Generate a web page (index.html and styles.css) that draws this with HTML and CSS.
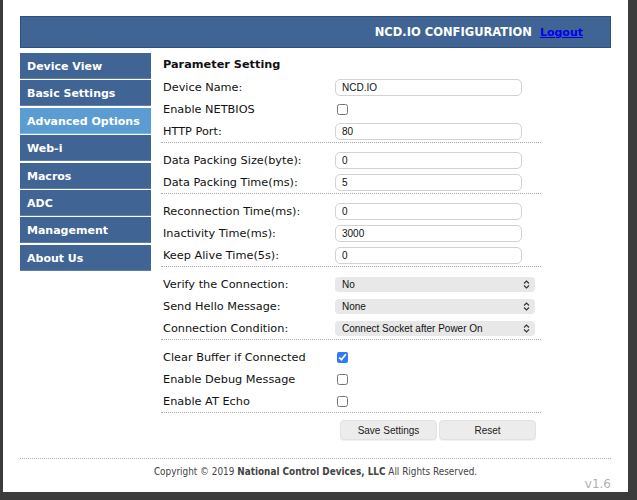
FILE: index.html
```html
<!DOCTYPE html>
<html lang="en">
<head>
    <meta charset="UTF-8">
    <title>NCD.IO Configuration</title>
    <link rel="stylesheet" href="styles.css">
</head>
<body>
    <div class="screen">
        <div class="page">
            <div class="topbar">
                <span class="title">NCD.IO CONFIGURATION</span>
                <a href="#" class="logout">Logout</a>
            </div>

            <div class="main">
                <ul class="menu">
                    <li>Device View</li>
                    <li>Basic Settings</li>
                    <li class="active">Advanced Options</li>
                    <li>Web-i</li>
                    <li>Macros</li>
                    <li>ADC</li>
                    <li>Management</li>
                    <li>About Us</li>
                </ul>

                <form class="settings" onsubmit="return false">
                    <h3>Parameter Setting</h3>
                    <div class="group">
                        <div class="row"><label>Device Name:</label><input type="text" class="field" value="NCD.IO"></div>
                        <div class="row"><label>Enable NETBIOS</label><input type="checkbox" class="check"></div>
                        <div class="row"><label>HTTP Port:</label><input type="text" class="field" value="80"></div>
                    </div>
                    <div class="group">
                        <div class="row"><label>Data Packing Size(byte):</label><input type="text" class="field" value="0"></div>
                        <div class="row"><label>Data Packing Time(ms):</label><input type="text" class="field" value="5"></div>
                    </div>
                    <div class="group">
                        <div class="row"><label>Reconnection Time(ms):</label><input type="text" class="field" value="0"></div>
                        <div class="row"><label>Inactivity Time(ms):</label><input type="text" class="field" value="3000"></div>
                        <div class="row"><label>Keep Alive Time(5s):</label><input type="text" class="field" value="0"></div>
                    </div>
                    <div class="group">
                        <div class="row"><label>Verify the Connection:</label>
                            <div class="select"><select><option>No</option></select><svg class="arrows" width="7" height="9" viewBox="0 0 7 9"><path d="M1 3.5 L3.5 1 L6 3.5 M1 5.5 L3.5 8 L6 5.5" fill="none" stroke="#333" stroke-width="1.1"/></svg></div>
                        </div>
                        <div class="row"><label>Send Hello Message:</label>
                            <div class="select"><select><option>None</option></select><svg class="arrows" width="7" height="9" viewBox="0 0 7 9"><path d="M1 3.5 L3.5 1 L6 3.5 M1 5.5 L3.5 8 L6 5.5" fill="none" stroke="#333" stroke-width="1.1"/></svg></div>
                        </div>
                        <div class="row"><label>Connection Condition:</label>
                            <div class="select"><select><option>Connect Socket after Power On</option></select><svg class="arrows" width="7" height="9" viewBox="0 0 7 9"><path d="M1 3.5 L3.5 1 L6 3.5 M1 5.5 L3.5 8 L6 5.5" fill="none" stroke="#333" stroke-width="1.1"/></svg></div>
                        </div>
                    </div>
                    <div class="group">
                        <div class="row"><label>Clear Buffer if Connected</label><input type="checkbox" class="check" checked></div>
                        <div class="row"><label>Enable Debug Message</label><input type="checkbox" class="check"></div>
                        <div class="row"><label>Enable AT Echo</label><input type="checkbox" class="check"></div>
                    </div>
                    <div class="buttons">
                        <button>Save Settings</button>
                        <button>Reset</button>
                    </div>
                </form>
            </div>

            <div class="footer">
                <p>Copyright &copy; 2019 <b>National Control Devices, LLC</b> All Rights Reserved.</p>
                <div class="version">v1.6</div>
            </div>
        </div>
    </div>
</body>
</html>
```

FILE: styles.css
```css
body {
    margin: 0;
    background: #3c3c3c;
    font-family: "DejaVu Sans", Verdana, sans-serif;
}
.screen {
    margin-left: 3px;
    width: 625px;
    height: 492px;
    background: #fff;
    overflow: hidden;
}
.page {
    padding: 16px 17px 0 17px;
}

/* barra superior */
.topbar {
    height: 30px;
    border: 1px solid #2f507e;
    background: #406594;
    display: flex;
    align-items: center;
    justify-content: flex-end;
    padding-right: 27px;
    font-size: 11.5px;
    font-weight: bold;
}
.title {
    color: #fff;
    margin-right: 8px;
}
.logout {
    color: #0000ee;
    font-size: 11px;
}

.main {
    display: flex;
    margin-top: 5px;
}

/* menu lateral */
.menu {
    list-style: none;
    margin: 0;
    padding: 0;
    width: 131px;
}
.menu li {
    height: 26px;
    line-height: 27px;
    margin-bottom: 1.4px;
    padding-left: 7px;
    background: #406594;
    border-bottom: 1px solid #5d7fa8;
    box-sizing: border-box;
    color: #fff;
    font-size: 11px;
    font-weight: bold;
}
.menu li.active {
    background: #5b9dd3;
    border-bottom-color: #7cb2de;
}

/* formulario */
.settings {
    margin-left: 10px;
    width: 380px;
}
.settings h3 {
    margin: 0;
    height: 23px;
    line-height: 23px;
    padding-left: 2px;
    font-size: 11.3px;
    color: #111;
}
.group {
    border-bottom: 1px dotted #a8a8a8;
    margin-bottom: 6px;
}
.row {
    display: flex;
    align-items: center;
    height: 22px;
    padding-left: 2px;
    font-size: 11.3px;
    color: #111;
}
.row label {
    width: 172px;
    flex-shrink: 0;
}
.field {
    width: 187px;
    height: 17px;
    box-sizing: border-box;
    border: 1px solid #d2d2d2;
    border-radius: 5px;
    padding: 0 6px;
    font-family: "Liberation Sans", Arial, sans-serif;
    font-size: 10px;
    color: #111;
    outline: none;
}
.check {
    width: 11px;
    height: 11px;
    margin: 0 0 0 2px;
    accent-color: #2f7bf5;
}
.select {
    position: relative;
    width: 200px;
}
.select select {
    appearance: none;
    -webkit-appearance: none;
    width: 200px;
    height: 15px;
    border: none;
    border-radius: 4px;
    background: #e8e8e8;
    padding: 0 0 0 7px;
    font-family: "Liberation Sans", Arial, sans-serif;
    font-size: 10px;
    color: #111;
    display: block;
}
.arrows {
    position: absolute;
    right: 5px;
    top: 3px;
    pointer-events: none;
}
.buttons {
    margin-top: 7px;
    padding-left: 179px;
    display: flex;
    gap: 2px;
}
.buttons button {
    width: 97px;
    height: 20px;
    border: 1px solid #e2e2e2;
    border-radius: 4px;
    background: #ececec;
    font-family: "Liberation Sans", Arial, sans-serif;
    font-size: 10px;
    color: #222;
    box-shadow: 0 1px 1px rgba(0,0,0,0.06);
}

/* pie */
.footer {
    margin-top: 18px;
    border-top: 1px dotted #b0b0b0;
    position: relative;
}
.footer p {
    margin: 7px 0 0 0;
    text-align: center;
    font-family: "DejaVu Sans Condensed", "DejaVu Sans", sans-serif;
    font-size: 9.9px;
    color: #444;
}
.version {
    text-align: right;
    color: #b0b0b0;
    font-size: 12px;
    margin-top: 0;
}
```
